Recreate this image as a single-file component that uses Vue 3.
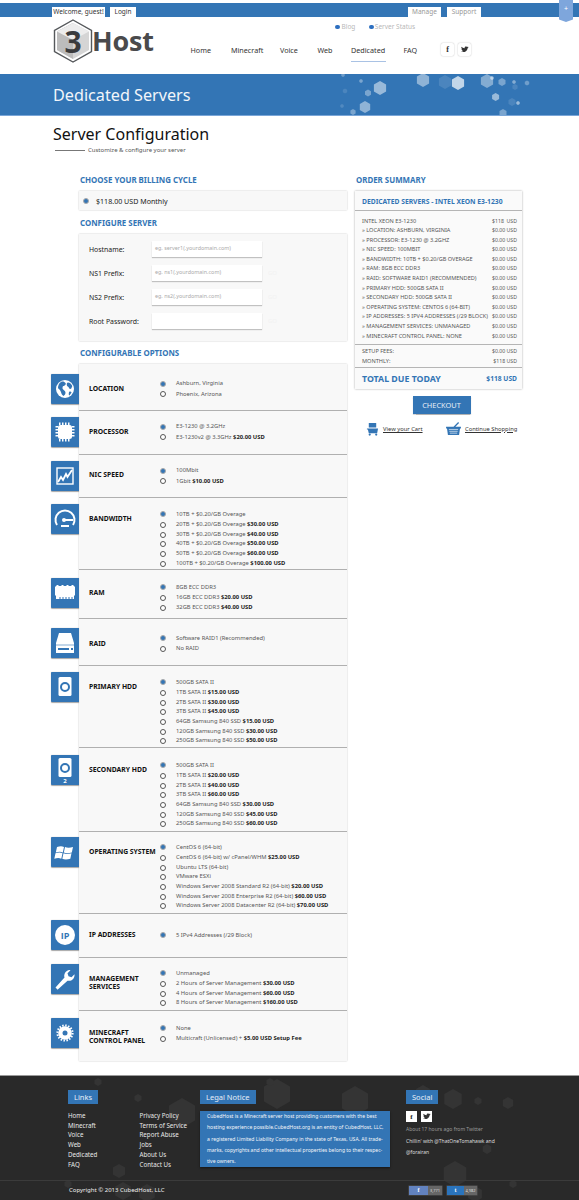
<script setup>
const topLeft = ['Welcome, guest!', 'Login']
const nav = [
  { t: 'Home', c: 'n1' }, { t: 'Minecraft', c: 'n2' }, { t: 'Voice', c: 'n3' },
  { t: 'Web', c: 'n4' }, { t: 'Dedicated', c: 'n5 on' }, { t: 'FAQ', c: 'n6' }
]
const hex = (cx, cy, r) => {
  const p = []
  for (let i = 0; i < 6; i++) {
    const a = Math.PI / 3 * i + Math.PI / 6
    p.push((cx + r * Math.cos(a)).toFixed(1) + ',' + (cy + r * Math.sin(a)).toFixed(1))
  }
  return p.join(' ')
}
const bannerHex = [
  [380,14,7,.5],[365,33,6,.45],[423,6,7,.45],[445,8,7,.12],[458,9,7,.7],[487,7,7,.4],[502,8,4,.35],[368,19,3.5,.35],
  [361,7,2,.35],[345,17,2.5,.12],[342,32,2,.15],[353,38,3,.35],[343,1,2,.3],[492,4,2,.5],[514,8,2,.4],[527,9,2.5,.3],
  [495.6,23,4,.5],[518,29,2,.5],[512,28,4,.12],[515,13,3,.12],[503,39,4,.35]
].map(h => ({ pts: hex(h[0], h[1], h[2]), o: h[3] }))
const footHex = [
  [277,18,15],[355,25,15],[182,37,15],[453,23,10],[455,98,13],[508,27,6],[478,25,4],[98,6,4],[138,22,4],[270,6,4],
  [119,95,7],[487,73,5],[513,108,4],[68,108,4],[123,115,9],[147,117,9],[475,118,8],[423,17,8]
].map(h => hex(h[0], h[1], h[2]))
const summary = [
  ['INTEL XEON E3-1230', '$118  USD'], ['» LOCATION: ASHBURN, VIRGINIA', '$0.00 USD'], ['» PROCESSOR: E3-1230 @ 3.2GHZ', '$0.00 USD'],
  ['» NIC SPEED: 100MBIT', '$0.00 USD'], ['» BANDWIDTH: 10TB + $0.20/GB OVERAGE', '$0.00 USD'], ['» RAM: 8GB ECC DDR3', '$0.00 USD'],
  ['» RAID: SOFTWARE RAID1 (RECOMMENDED)', '$0.00 USD'], ['» PRIMARY HDD: 500GB SATA II', '$0.00 USD'], ['» SECONDARY HDD: 500GB SATA II', '$0.00 USD'],
  ['» OPERATING SYSTEM: CENTOS 6 (64-BIT)', '$0.00 USD'], ['» IP ADDRESSES: 5 IPV4 ADDRESSES (/29 BLOCK)', '$0.00 USD'],
  ['» MANAGEMENT SERVICES: UNMANAGED', '$0.00 USD'], ['» MINECRAFT CONTROL PANEL: NONE', '$0.00 USD']
]
const rows = [
  { id: 'globe', label: ['LOCATION'], h: 47, pt: 15, lt: 20.5, it: 10, opts: [['Ashburn, Virginia'], ['Phoenix, Arizona']] },
  { id: 'chip', label: ['PROCESSOR'], h: 44, pt: 11, lt: 16.5, it: 6, opts: [['E3-1230 @ 3.2GHz'], ['E3-1230v2 @ 3.3GHz ', '$20.00 USD']] },
  { id: 'chart', label: ['NIC SPEED'], h: 43, pt: 11, lt: 16, it: 6, opts: [['100Mbit'], ['1Gbit ', '$10.00 USD']] },
  { id: 'gauge', label: ['BANDWIDTH'], h: 72, pt: 11.5, lt: 17, it: 6, opts: [['10TB + $0.20/GB Overage'], ['20TB + $0.20/GB Overage ', '$30.00 USD'], ['30TB + $0.20/GB Overage ', '$40.00 USD'], ['40TB + $0.20/GB Overage ', '$50.00 USD'], ['50TB + $0.20/GB Overage ', '$60.00 USD'], ['100TB + $0.20/GB Overage ', '$100.00 USD']] },
  { id: 'ram', label: ['RAM'], h: 49, pt: 12.5, lt: 19, it: 8, opts: [['8GB ECC DDR3'], ['16GB ECC DDR3 ', '$20.00 USD'], ['32GB ECC DDR3 ', '$40.00 USD']] },
  { id: 'raid', label: ['RAID'], h: 47, pt: 14.5, lt: 20.5, it: 9, opts: [['Software RAID1 (Recommended)'], ['No RAID']] },
  { id: 'hdd', label: ['PRIMARY HDD'], h: 82, pt: 11.5, lt: 16.5, it: 6, opts: [['500GB SATA II'], ['1TB SATA II ', '$15.00 USD'], ['2TB SATA II ', '$30.00 USD'], ['3TB SATA II ', '$45.00 USD'], ['64GB Samsung 840 SSD ', '$15.00 USD'], ['120GB Samsung 840 SSD ', '$30.00 USD'], ['250GB Samsung 840 SSD ', '$50.00 USD']] },
  { id: 'hdd2', label: ['SECONDARY HDD'], h: 84, pt: 12.5, lt: 18, it: 7, opts: [['500GB SATA II'], ['1TB SATA II ', '$20.00 USD'], ['2TB SATA II ', '$40.00 USD'], ['3TB SATA II ', '$60.00 USD'], ['64GB Samsung 840 SSD ', '$30.00 USD'], ['120GB Samsung 840 SSD ', '$45.00 USD'], ['250GB Samsung 840 SSD ', '$60.00 USD']] },
  { id: 'win', label: ['OPERATING SYSTEM'], h: 82, pt: 10.5, lt: 16, it: 5, opts: [['CentOS 6 (64-bit)'], ['CentOS 6 (64-bit) w/ cPanel/WHM ', '$25.00 USD'], ['Ubuntu LTS (64-bit)'], ['VMware ESXi'], ['Windows Server 2008 Standard R2 (64-bit) ', '$20.00 USD'], ['Windows Server 2008 Enterprise R2 (64-bit) ', '$60.00 USD'], ['Windows Server 2008 Datacenter R2 (64-bit) ', '$70.00 USD']] },
  { id: 'ip', label: ['IP ADDRESSES'], h: 44, pt: 16.5, lt: 16.5, it: 6, opts: [['5 IPv4 Addresses (/29 Block)']] },
  { id: 'wrench', label: ['MANAGEMENT', 'SERVICES'], h: 53, pt: 10.5, lt: 16.5, it: 6, opts: [['Unmanaged'], ['2 Hours of Server Management ', '$30.00 USD'], ['4 Hours of Server Management ', '$60.00 USD'], ['8 Hours of Server Management ', '$160.00 USD']] },
  { id: 'gear', label: ['MINECRAFT', 'CONTROL PANEL'], h: 50, pt: 12.5, lt: 17.5, it: 7, opts: [['None'], ['Multicraft (Unlicensed) + ', '$5.00 USD Setup Fee']], last: true }
]
const links1 = ['Home', 'Minecraft', 'Voice', 'Web', 'Dedicated', 'FAQ']
const links2 = ['Privacy Policy', 'Terms of Service', 'Report Abuse', 'Jobs', 'About Us', 'Contact Us']
const legal = [
  'CubedHost is a Minecraft server host providing customers with the best',
  'hosting experience possible.CubedHost.org is an entity of CubedHost, LLC,',
  'a registered Limited Liability Company in the state of Texas, USA. All trade-',
  'marks, copyrights and other intellectual properties belong to their respec-',
  'tive owners.'
]
const fields = [
  { l: 'Hostname:', p: 'eg. server1(.yourdomain.com)', go: false },
  { l: 'NS1 Prefix:', p: 'eg. ns1(.yourdomain.com)', go: true },
  { l: 'NS2 Prefix:', p: 'eg. ns2(.yourdomain.com)', go: true },
  { l: 'Root Password:', p: '', go: true }
]
</script>

<template>
  <div class="page">
    <div class="topbar">
      <div class="tabs">
        <span class="tab dark t1">{{ topLeft[0] }}</span>
        <span class="tab dark t2">{{ topLeft[1] }}</span>
        <span class="tab t3">Manage</span>
        <span class="tab t4">Support</span>
      </div>
      <div class="ribbon">+</div>
    </div>

    <header class="head">
      <div class="logo">
        <svg class="logosvg" viewBox="0 0 40 44" width="40" height="44">
          <polygon points="20,1 38.5,11.5 38.5,32.5 20,43 1.5,32.5 1.5,11.5" fill="#fff" stroke="#55585b" stroke-width="1.4"/>
          <polygon points="20,4 36,12.5 36,31 20,40 4,31 4,12.5" fill="#d5d5d5"/>
          <polygon points="4,12.5 20,4 20,40 4,31" fill="#bcbcbc"/>
          <polygon points="20,4 36,12.5 20,21 4,12.5" fill="#ececec"/>
          <text x="20" y="34" text-anchor="middle" class="three">3</text>
        </svg>
        <span class="logotext">Host</span>
      </div>
      <div class="mini">
        <span class="dot"></span><span class="mini1">Blog</span>
        <span class="dot d2"></span><span>Server Status</span>
      </div>
      <nav class="nav">
        <span v-for="n in nav" :key="n.t" :class="['navitem', n.c]">{{ n.t }}</span>
      </nav>
      <div class="soc">
        <span class="socb">f</span>
        <span class="socb">
          <svg viewBox="0 0 12 10" width="8" height="7"><path d="M0 8c3 2 9 1 10-5l1.500-1.500-1.600.3L11 .5 9 1.200C7.500-.3 5 1 5.500 3 3.500 3 1.800 2 .8 .8c-.6 1.300-.2 2.500.8 3.300L.6 3.900c0 1.200.8 2 2 2.300l-1 .1c.3.800 1 1.300 2 1.400C2.600 8.200 1.300 8.300 0 8z" fill="#333"/></svg>
        </span>
      </div>
    </header>

    <section class="banner">
      <svg class="deco" viewBox="0 0 579 41" width="579" height="41">
        <polygon v-for="(h, i) in bannerHex" :key="i" :points="h.pts" fill="#fff" :fill-opacity="h.o"/>
      </svg>
      <h1>Dedicated Servers</h1>
    </section>

    <section class="intro">
      <h2>Server Configuration</h2>
      <div class="sub"><i></i><span>Customize &amp; configure your server</span></div>
    </section>

    <main class="cols">
      <div class="left">
        <h3 class="first">CHOOSE YOUR BILLING CYCLE</h3>
        <div class="box billing">
          <span class="radio on"></span><span>$118.00 USD Monthly</span>
        </div>
        <h3 class="h2nd">CONFIGURE SERVER</h3>
        <div class="box config">
          <div v-for="f in fields" :key="f.l" class="field">
            <label>{{ f.l }}</label>
            <span class="input">{{ f.p }}</span>
            <span class="go" v-if="f.go">GO</span>
          </div>
        </div>
        <h3 class="h3rd">CONFIGURABLE OPTIONS</h3>
        <div class="box options">
          <div
            v-for="r in rows"
            :key="r.id"
            :class="['row', { last: r.last }]"
            :style="{ height: r.h + 'px', paddingTop: r.pt + 'px' }"
          >
            <div class="ico" :style="{ top: r.it + 'px' }">
              <svg viewBox="0 0 28 30" width="28" height="30">
                <g v-if="r.id === 'globe'">
                  <circle cx="14" cy="15" r="9" fill="#fff"/>
                  <path d="M10 8c2-1 3.500 0 4.500 1s-1 3-2 3-1 1.500-1 2.500 3 2 3 4-1 2.500-2 3.500c-2-1-2-3-3-5s-2.500-2-2.500-3.500 1-4.500 3-5.500zM17 8.500c1.800 0 3.500 1.800 4.300 3.500l-1 2.500c-1 1-2.500 0-2.500-1s-2-1-2-2.500 0-2.500 1.200-2.500zM18.500 17.500c1 0 2 0 2 1l-2 3c-1 0-1-3 0-4z" fill="#3375b5"/>
                </g>
                <g v-else-if="r.id === 'chip'" fill="#fff">
                  <rect x="7" y="8" width="14" height="14" rx="2.500"/>
                  <path d="M8 5.500h1.500V8H8zM11 5.500h1.500V8H11zM14 5.500h1.500V8H14zM17 5.500h1.500V8H17zM8 22h1.500v2.500H8zM11 22h1.500v2.500H11zM14 22h1.500v2.500H14zM17 22h1.500v2.500H17zM4.500 9H7v1.500H4.500zM4.500 12H7v1.500H4.500zM4.500 15H7v1.500H4.500zM4.500 18H7v1.500H4.500zM21 9h2.500v1.500H21zM21 12h2.500v1.500H21zM21 15h2.500v1.500H21zM21 18h2.500v1.500H21z"/>
                </g>
                <g v-else-if="r.id === 'chart'">
                  <rect x="6" y="7" width="16" height="16" fill="none" stroke="#fff" stroke-width="1.400"/>
                  <path d="M7 21l3-5 2 3 3-6 1.500 3L21 9" fill="none" stroke="#fff" stroke-width="1.800"/>
                </g>
                <g v-else-if="r.id === 'gauge'">
                  <path d="M6 21a9.500 9.500 0 1 1 16 0" fill="none" stroke="#fff" stroke-width="2"/>
                  <path d="M14 16h8M10 22h8" stroke="#fff" stroke-width="2"/>
                  <circle cx="13" cy="16" r="2" fill="#fff"/>
                </g>
                <g v-else-if="r.id === 'ram'" fill="#fff">
                  <path d="M6 7h1l1 1h2l1-1h1l1 1h2l1-1h1l1 1h2l1-1h1l2 2v8l-1 1v3h-1.500v-2h-1v2h-2v-2h-1v2h-2v-2h-1v2h-2v-2h-1v2h-2v-2h-1v2H5v-3l-1-1V9z"/>
                </g>
                <g v-else-if="r.id === 'raid'">
                  <path d="M8 5h12l3 10v10H5V15z" fill="#fff"/>
                  <path d="M5 17h18" stroke="#3375b5" stroke-width=".6"/>
                  <path d="M7 20h11v2H7zM20 20h2v2h-2z" fill="#3375b5"/>
                </g>
                <g v-else-if="r.id === 'hdd' || r.id === 'hdd2'">
                  <rect x="7.500" :y="r.id === 'hdd' ? 5 : 3" width="13" height="19" rx="1.500" fill="#fff"/>
                  <circle cx="14" :cy="r.id === 'hdd' ? 15 : 13" r="4" fill="none" stroke="#3375b5" stroke-width="2"/>
                  <text v-if="r.id === 'hdd2'" x="14" y="28" text-anchor="middle" class="two">2</text>
                </g>
                <g v-else-if="r.id === 'win'" fill="#fff">
                  <path d="M6 10c3-1 5-1 7 0l-1.200 5.500c-2-1-4-1-7 0zM14 10c2 1 5 1 8 0l-1.200 5.500c-3 1-6 1-8 0zM4.500 16.300c3-1 5-1 7 0l-1.200 5.500c-2-1-4-1-7 0zM12.500 16.300c2 1 5 1 8 0l-1.200 5.500c-3 1-6 1-8 0z"/>
                </g>
                <g v-else-if="r.id === 'ip'">
                  <circle cx="14" cy="15" r="10" fill="#fff"/>
                  <text x="14" y="18.500" text-anchor="middle" class="iptext">IP</text>
                </g>
                <g v-else-if="r.id === 'wrench'">
                  <path d="M6 25l-1.500-1.500 9-10c-1-3 1-7 5-7.500l1 .2-3 3 1 3 3 1 3-3c.5 4-3 7.500-7 6.500l-10 9z" fill="#fff"/>
                </g>
                <g v-else-if="r.id === 'gear'">
                  <circle cx="14" cy="15" r="6.800" fill="#fff"/>
                  <circle cx="14" cy="15" r="7.600" fill="none" stroke="#fff" stroke-width="2" stroke-dasharray="1.500 1.480"/>
                  <circle cx="14" cy="15" r="2.500" fill="#3375b5"/>
                </g>
              </svg>
            </div>
            <div class="rlabel" :style="{ marginTop: (r.lt - r.pt) + 'px' }">
              <div v-for="l in r.label" :key="l">{{ l }}</div>
            </div>
            <div class="opts">
              <div v-for="(o, i) in r.opts" :key="i" :class="['opt', { firstopt: i === 0 }]">
                <span :class="['radio', { on: i === 0 }]"></span>
                <span class="otxt">{{ o[0] }}<b v-if="o[1]">{{ o[1] }}</b></span>
              </div>
            </div>
          </div>
        </div>
      </div>

      <aside class="right">
        <h3 class="first">ORDER SUMMARY</h3>
        <div class="sum">
          <div class="sumhead">DEDICATED SERVERS - INTEL XEON E3-1230</div>
          <div class="sumlist">
            <div v-for="s in summary" :key="s[0]" class="sline"><span>{{ s[0] }}</span><span class="amt">{{ s[1] }}</span></div>
          </div>
          <div class="sumfees">
            <div class="sline"><span>SETUP FEES:</span><span class="amt">$0.00 USD</span></div>
            <div class="sline"><span>MONTHLY:</span><span class="amt">$118  USD</span></div>
          </div>
          <div class="total"><span>TOTAL DUE TODAY</span><span class="tamt">$118  USD</span></div>
        </div>
        <button class="checkout">CHECKOUT</button>
        <div class="cartlinks">
          <span class="clink cart">
            <svg viewBox="0 0 14 15" width="13" height="14"><path d="M3 1h8v5H3zM1 7h12l-1 5H3L2 8H1z" fill="#3375b5"/><circle cx="4" cy="13.500" r="1.200" fill="#3375b5"/><circle cx="11" cy="13.500" r="1.200" fill="#3375b5"/></svg>
            <u>View your Cart</u>
          </span>
          <span class="clink shop">
            <svg viewBox="0 0 16 14" width="15" height="13"><path d="M0 5h16v2h-1l-1 7H2L1 7H0zM8 5l5-5 1 1-4 4z" fill="#3375b5"/><path d="M3 8h10M3.500 10h9M4 12h8" stroke="#fff" stroke-width=".7"/></svg>
            <u>Continue Shopping</u>
          </span>
        </div>
      </aside>
    </main>

    <footer class="foot">
      <svg class="deco" viewBox="0 0 579 124" width="579" height="124">
        <polygon v-for="(h, i) in footHex" :key="i" :points="h" fill="#343434"/>
      </svg>
      <div class="fcols">
        <div class="flinks">
          <span class="badge">Links</span>
          <div class="lists">
            <ul><li v-for="l in links1" :key="l">{{ l }}</li></ul>
            <ul><li v-for="l in links2" :key="l">{{ l }}</li></ul>
          </div>
        </div>
        <div class="flegal">
          <span class="badge">Legal Notice</span>
          <div class="legal"><p v-for="l in legal" :key="l">{{ l }}</p></div>
        </div>
        <div class="fsocial">
          <span class="badge">Social</span>
          <div class="fsoc">
            <span class="fsb">f</span>
            <span class="fsb"><svg viewBox="0 0 12 10" width="8" height="7"><path d="M0 8c3 2 9 1 10-5l1.500-1.500-1.600.3L11 .5 9 1.200C7.500-.3 5 1 5.500 3 3.500 3 1.800 2 .8 .8c-.6 1.300-.2 2.500.8 3.300L.6 3.900c0 1.200.8 2 2 2.300l-1 .1c.3.800 1 1.300 2 1.400C2.600 8.200 1.300 8.300 0 8z" fill="#333"/></svg></span>
          </div>
          <div class="tw1">About 17 hours ago from Twitter</div>
          <div class="tw2">Chillin' with @ThatOneTomahawk and</div>
          <div class="tw2">@forairan</div>
        </div>
      </div>
      <div class="fbottom">
        <span class="copy">Copyright © 2013 CubedHost, LLC</span>
        <span class="cnt fb"><em>f</em><small>3,771</small></span>
        <span class="cnt tw"><em>t</em><small>4,982</small></span>
      </div>
    </footer>
  </div>
</template>

<style>
html, body { margin: 0; background: #fff; }
</style>

<style scoped>
.page { width: 579px; height: 1200px; overflow: hidden; position: relative; font-family: "Noto Sans", "Open Sans", sans-serif; color: #333; background: #fff; padding-top: .02px; box-sizing: border-box; }
h1, h2, h3, p, ul { margin: 0; padding: 0; font-weight: normal; }
ul { list-style: none; }

.topbar { margin-top: 3px; height: 14px; background: #3375b5; position: relative; }
.tabs { display: flex; padding: 4px 0 0 52px; height: 10px; }
.tab { background: #fff; font-size: 6.500px; line-height: 10px; text-align: center; color: #999; }
.tab.dark { color: #333; }
.t1 { width: 53px; }
.t2 { width: 26px; margin-left: 5px; }
.t3 { width: 33px; margin-left: 272px; }
.t4 { width: 34px; margin-left: 6px; }
.ribbon { position: absolute; left: 559px; top: -3px; width: 14px; height: 22px; background: #7ea6dc; color: #fff; font-size: 7px; line-height: 18px; text-align: center; clip-path: polygon(0 0, 100% 0, 100% 88%, 50% 100%, 0 88%); }

.head { height: 57px; position: relative; }
.logo { position: absolute; left: 53px; top: 2px; display: flex; align-items: center; height: 44px; }
.logosvg { display: block; }
.three { font: bold 30px "Open Sans", sans-serif; fill: #3a3b3d; }
.logotext { font: bold 27px/44px "Open Sans", sans-serif; color: #4a4a4c; margin-left: -1px; letter-spacing: -.2px; }
.mini { position: absolute; left: 335px; top: 5px; font-size: 6.500px; line-height: 10px; color: #b8b8b8; display: flex; align-items: center; }
.dot { width: 4.500px; height: 4.500px; background: #2d6fc0; border-radius: 50%; margin-right: 2px; }
.d2 { margin-left: 14px; margin-right: 1px; }
.nav { position: absolute; left: 0; top: 23px; height: 20px; width: 100%; }
.navitem { position: absolute; top: 0; font-size: 7.200px; line-height: 20px; color: #333; }
.n1 { left: 190.500px; } .n2 { left: 231px; } .n3 { left: 280px; } .n4 { left: 317.500px; } .n5 { left: 351px; } .n6 { left: 403.500px; }
.on.navitem { border-bottom: 1px solid #a9c2e4; height: 21px; padding-right: 1px; }
.soc { position: absolute; left: 441px; top: 26px; display: flex; gap: 4px; }
.socb { width: 13px; height: 13px; background: #fff; box-shadow: 0 0 1.500px rgba(0,0,0,.3); border-radius: 2px; display: flex; align-items: center; justify-content: center; font: bold 8px "Liberation Serif", serif; color: #333; }

.banner { height: 41px; background: #3375b5; border-bottom: 1px solid #7aa6d8; position: relative; overflow: hidden; }
.deco { position: absolute; left: 0; top: 0; display: block; }
.banner h1 { position: relative; padding-left: 53px; font-size: 16.200px; line-height: 42px; color: #f2f5fa; }

.intro { padding: 7px 0 0 53px; height: 52px; box-sizing: border-box; }
.intro h2 { font-size: 16px; line-height: 22px; color: #111; }
.sub { display: flex; align-items: center; font-size: 6px; line-height: 8px; margin-top: 1px; color: #555; padding-left: 2px; }
.sub i { width: 30px; height: 1px; background: #777; margin-right: 3px; }

.cols { display: flex; padding-left: 79px; height: 908px; }
.left { width: 268px; }
.right { width: 167px; margin-left: 8px; }
h3 { color: #3375b5; font-size: 7.900px; font-weight: bold; line-height: 10px; padding-left: 1px; }
h3.first { margin-top: 7px; margin-bottom: 6px; }
.h2nd { margin-top: 8px; margin-bottom: 6px; }
.h3rd { margin-top: 7px; margin-bottom: 6px; }
.box { background: #f8f8f8; box-shadow: 0 0 1.500px rgba(0,0,0,.25); }
.billing { height: 19px; display: flex; align-items: center; font-size: 7.100px; color: #222; padding-left: 4px; box-sizing: border-box; }
.billing .radio { margin-right: 7px; }
.radio { width: 6px; height: 6px; border: .8px solid #555; border-radius: 50%; background: #fff; box-sizing: border-box; flex: none; display: inline-block; }
.radio.on { background: #3375b5; border-color: #aaa; }

.config { height: 107px; padding: 7px 0 0 10px; box-sizing: border-box; }
.field { display: flex; align-items: center; height: 16px; margin-bottom: 8px; }
.field label { width: 63px; font-size: 6.900px; color: #222; }
.input { width: 110px; height: 16px; background: #fff; box-shadow: 0 1px 1px rgba(0,0,0,.22); font-size: 5.400px; line-height: 15px; color: #aaa; padding-left: 3px; box-sizing: border-box; }
.go { color: #f2f2f2; font-size: 6px; margin-left: 6px; }

.options { position: relative; }
.row { display: flex; box-sizing: border-box; border-bottom: 1px solid #b0b0b0; position: relative; padding-left: 10px; }
.row.last { border-bottom: 0; }
.ico { position: absolute; left: -28px; width: 28px; height: 30px; background: #3375b5; box-shadow: 0 .5px 1px rgba(0,0,0,.35); border-radius: 1px 0 0 1px; }
.ico svg { display: block; }
.two { font: bold 6px "Open Sans", sans-serif; fill: #fff; }
.iptext { font: bold 9px "Open Sans", sans-serif; fill: #3375b5; }
.rlabel { width: 71px; flex: none; font-size: 6.800px; line-height: 8.500px; font-weight: bold; color: #111; white-space: nowrap; }
.opt { display: flex; align-items: center; height: 9.700px; }
.firstopt { margin-bottom: .8px; }
.opt .radio { margin-right: 10px; }
.otxt { font-size: 5.800px; line-height: 9.700px; color: #555; white-space: pre; }
.otxt b { color: #222; }

.sum { background: #fafafa; box-shadow: 0 0 2px rgba(0,0,0,.35); height: 198px; box-sizing: border-box; }
.sumhead { height: 19px; border-bottom: 1px solid #b5b5b5; color: #3375b5; font-size: 6.750px; font-weight: bold; line-height: 22px; padding-left: 7px; }
.sumlist { padding: 5.500px 0 2.500px; border-bottom: 1px solid #b5b5b5; height: 125px; }
.sline { display: flex; justify-content: space-between; font-size: 5.600px; line-height: 9.600px; color: #555; padding: 0 5px 0 7px; white-space: pre; }
.amt { width: 26px; text-align: right; font-size: 5.200px; }
.sumfees { height: 23px; padding-top: 2px; box-sizing: border-box; border-bottom: 1px solid #b5b5b5; }
.total { display: flex; justify-content: space-between; align-items: center; height: 21px; color: #3375b5; font-weight: bold; padding: 0 5px 0 7px; font-size: 8.800px; white-space: pre; }
.tamt { font-size: 6.700px; }
.checkout { display: block; margin: 7px 0 0 57.500px; width: 58px; height: 18px; border: 0; background: #3375b5; color: #e8eef7; font: 7.400px "Noto Sans", sans-serif; padding: 0; box-shadow: 0 .5px 1px rgba(0,0,0,.3); }
.cartlinks { position: relative; height: 16px; margin-top: 8px; }
.clink { position: absolute; top: 0; display: flex; align-items: center; gap: 4px; font-size: 5.800px; color: #333; }
.cart { left: 11px; }
.shop { left: 91px; }

.foot { position: absolute; left: 0; top: 1075px; width: 579px; height: 125px; background: #292929; border-top: 1px solid #9a9a9a; box-sizing: border-box; color: #ddd; overflow: hidden; }
.fcols { position: relative; display: flex; height: 104px; padding-top: 14px; box-sizing: border-box; }
.badge { display: block; width: fit-content; background: #3375b5; color: #e6eef8; font-size: 7.500px; line-height: 14px; height: 14px; padding: 0 6px; }
.flinks { margin-left: 68px; width: 132px; flex: none; }
.lists { display: flex; margin-top: 7px; }
.lists ul { width: 71.500px; flex: none; }
.lists li { font-size: 6.200px; line-height: 9.700px; color: #e8e8e8; white-space: nowrap; }
.flegal { width: 206px; flex: none; }
.legal { margin-top: 7px; width: 190px; height: 56px; background: #3375b5; font-size: 5.050px; line-height: 11.300px; color: #f4f6fa; padding: 0 7px; box-sizing: border-box; box-shadow: 0 1px 2px rgba(0,0,0,.5); overflow: hidden; white-space: nowrap; }
.fsoc { display: flex; gap: 4px; margin-top: 7px; }
.fsb { width: 11px; height: 11px; background: #fff; display: flex; align-items: center; justify-content: center; color: #222; font: bold 7px "Liberation Serif", serif; }
.tw1 { font-size: 5px; line-height: 11.600px; color: #999; margin-top: 2px; }
.tw2 { font-size: 5px; line-height: 11.600px; color: #ddd; }
.fbottom { position: relative; border-top: 1px solid #3b3b3b; height: 20px; font-size: 6px; }
.copy { position: absolute; left: 69px; top: 3px; line-height: 12px; color: #eee; }
.cnt { position: absolute; top: 5px; height: 9px; display: flex; font-size: 4px; line-height: 9px; color: #ddd; box-shadow: 0 0 0 .5px #555; }
.cnt em { font: bold 6px/9px "Liberation Serif", serif; color: #fff; text-align: center; }
.cnt small { background: #666; font-size: 4px; text-align: center; }
.fb { left: 409px; width: 33px; } .fb em { width: 19px; background: #6282bf; } .fb small { width: 14px; }
.tw { left: 447px; width: 30px; } .tw em { width: 17px; background: #2a74bd; } .tw small { width: 13px; }
</style>
